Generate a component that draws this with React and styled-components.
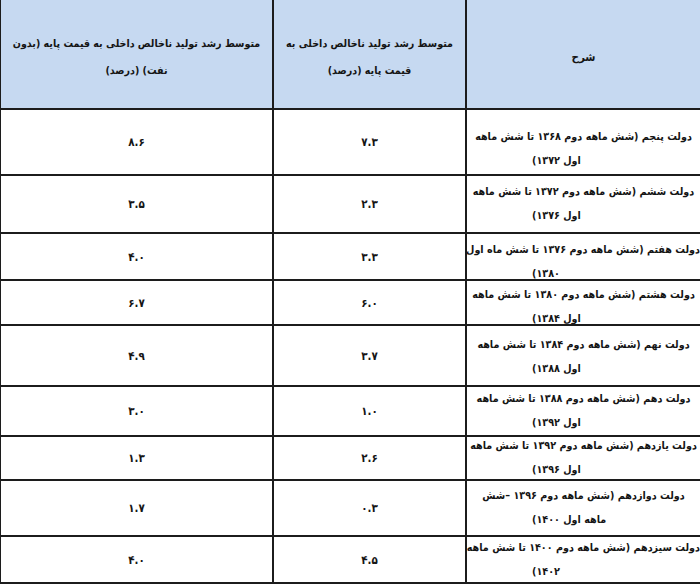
import React from 'react';
import styled, { createGlobalStyle } from 'styled-components';

const Global = createGlobalStyle`
  html, body { margin: 0; padding: 0; background: #ffffff; overflow: hidden; }
  #root { width: 700px; height: 584px; overflow: hidden; }
`;

const Table = styled.div`
  direction: rtl;
  box-sizing: border-box;
  width: 700px;
  height: 584px;
  padding: 0 0 2px 1px;
  display: grid;
  grid-template-columns: 233px 191px 271px;
  grid-template-rows: ${(p) => p.$rows};
  gap: 2px;
  background: #1c1c1c;
  font-family: "DejaVu Sans Condensed", "DejaVu Sans", sans-serif;
  font-stretch: condensed;
  font-weight: bold;
  color: #151515;
`;

const HeadCell = styled.div`
  background: #c6d9f1;
  display: flex;
  flex-direction: column;
  justify-content: center;
  align-items: center;
  padding-top: 6px;
  font-size: 10.6px;
  line-height: 27px;
  text-align: center;
  overflow: hidden;
`;

const HeadLine = styled.div`
  white-space: nowrap;
`;

const TitleLine = styled(HeadLine)`
  font-size: 11.5px;
`;

const NumCell = styled.div`
  background: #ffffff;
  display: flex;
  align-items: center;
  justify-content: center;
  font-size: 11.5px;
`;

const DescCell = styled.div`
  background: #ffffff;
  display: flex;
  flex-direction: column;
  justify-content: center;
  padding-top: ${(p) => p.$shift * 2}px;
  font-size: 10.7px;
  line-height: 24px;
  overflow: hidden;
`;

const FirstLine = styled.div`
  white-space: nowrap;
  text-align: center;
`;

const ContLine = styled.div`
  white-space: nowrap;
  text-align: left;
  padding-left: 65px;
`;

const rows = [
  { h: 64, shift: 7, a: 'دولت پنجم (شش ماهه دوم ۱۳۶۸ تا شش ماهه', b: 'اول ۱۳۷۲)', v2: '۷.۳', v1: '۸.۶' },
  { h: 56, shift: 0, a: 'دولت ششم (شش ماهه دوم ۱۳۷۲ تا شش ماهه', b: 'اول ۱۳۷۶)', v2: '۲.۳', v1: '۳.۵' },
  { h: 45, shift: 5, a: 'دولت هفتم (شش ماهه دوم ۱۳۷۶ تا شش ماه اول', b: '۱۳۸۰)', v2: '۳.۳', v1: '۴.۰' },
  { h: 43, shift: 4, a: 'دولت هشتم (شش ماهه دوم ۱۳۸۰ تا شش ماهه', b: 'اول ۱۳۸۴)', v2: '۶.۰', v1: '۶.۷' },
  { h: 59, shift: 1, a: 'دولت نهم (شش ماهه دوم ۱۳۸۴ تا شش ماهه', b: 'اول ۱۳۸۸)', v2: '۳.۷', v1: '۴.۹' },
  { h: 48, shift: 0, a: 'دولت دهم (شش ماهه دوم ۱۳۸۸ تا شش ماهه', b: 'اول ۱۳۹۲)', v2: '۱.۰', v1: '۳.۰' },
  { h: 42, shift: 0, a: 'دولت یازدهم (شش ماهه دوم ۱۳۹۲ تا شش ماهه', b: 'اول ۱۳۹۶)', v2: '۲.۶', v1: '۱.۳' },
  { h: 54, shift: 0, a: 'دولت دوازدهم (شش ماهه دوم ۱۳۹۶ –شش', b: 'ماهه اول ۱۴۰۰)', v2: '۰.۳', v1: '۱.۷' },
  { h: 45, shift: 0, a: 'دولت سیزدهم (شش ماهه دوم ۱۴۰۰ تا شش ماهه', b: '۱۴۰۲)', v2: '۴.۵', v1: '۴.۰' },
];

export default function App() {
  const template = `108px ${rows.map((r) => `${r.h}px`).join(' ')}`;
  return (
    <>
      <Global />
      <Table $rows={template}>
        <HeadCell>
          <TitleLine>شرح</TitleLine>
        </HeadCell>
        <HeadCell>
          <HeadLine>متوسط رشد تولید ناخالص داخلی به</HeadLine>
          <HeadLine>قیمت پایه (درصد)</HeadLine>
        </HeadCell>
        <HeadCell>
          <HeadLine>متوسط رشد تولید ناخالص داخلی به قیمت پایه (بدون</HeadLine>
          <HeadLine>نفت)  (درصد)</HeadLine>
        </HeadCell>
        {rows.map((r, i) => (
          <React.Fragment key={i}>
            <DescCell $shift={r.shift}>
              <FirstLine>{r.a}</FirstLine>
              <ContLine>{r.b}</ContLine>
            </DescCell>
            <NumCell>{r.v2}</NumCell>
            <NumCell>{r.v1}</NumCell>
          </React.Fragment>
        ))}
      </Table>
    </>
  );
}
